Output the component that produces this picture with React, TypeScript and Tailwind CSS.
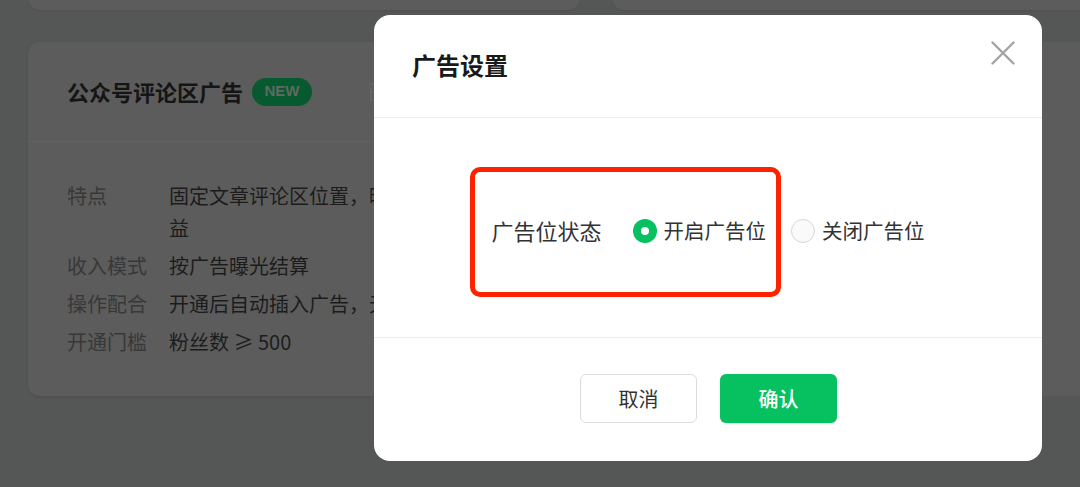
const cn = '"PingFang SC", "Noto Sans CJK SC", "Noto Sans", sans-serif';

const rows = [
    { label: "特点", value: "固定文章评论区位置，曝光稳定，提升流量主收益" },
    { label: "收入模式", value: "按广告曝光结算" },
    { label: "操作配合", value: "开通后自动插入广告，无需额外操作" },
    { label: "开通门槛", value: "粉丝数 ≥ 500" },
];

const Radio = ({ checked, label }: { checked: boolean; label: string }) => (
    <label className="flex items-center gap-[7px]">
        {checked ? (
            <span className="w-6 h-6 rounded-full bg-[#07c160] flex items-center justify-center">
                <span className="w-2 h-2 rounded-full bg-white" />
            </span>
        ) : (
            <span className="w-6 h-6 rounded-full bg-[#fafafa] border border-[#d6d6d6]" />
        )}
        <span className="text-[20.5px] text-[#333]">{label}</span>
    </label>
);

const App = () => {
    return (
        <div
            className="relative w-[1080px] h-[487px] overflow-hidden bg-[#555756]"
            style={{ fontFamily: cn }}
        >
            {/* page behind the mask */}
            <div className="grid grid-cols-[552px_552px] gap-8 pl-7">
                <div className="h-10 -mt-[30px] rounded-b-xl bg-[#5c5c5c] shadow-[0_1px_2px_rgba(0,0,0,0.08)]" />
                <div className="h-10 -mt-[30px] rounded-b-xl bg-[#5c5c5c] shadow-[0_1px_2px_rgba(0,0,0,0.08)]" />
                <div className="h-[354px] rounded-xl bg-[#5c5c5c] shadow-[0_1px_3px_rgba(0,0,0,0.1)]">
                    <div className="h-[100px] flex items-center pl-[39px] pr-10 border-b border-[#616161]">
                        <span className="text-[22px] font-bold text-[#151515]">公众号评论区广告</span>
                        <span className="ml-[9px] w-[60px] h-7 rounded-full bg-[#075a2f] flex items-center justify-center text-[15px] font-bold text-[#5d6b62]" style={{ fontFamily: '"Liberation Sans", sans-serif' }}>
                            NEW
                        </span>
                        <span className="ml-[55px] text-[20px] text-[#666]">已开通</span>
                    </div>
                    <div className="pt-[38px] pl-[39px] flex flex-col gap-[6px]">
                        {rows.map((row, index) => (
                            <div key={index} className="flex text-[20px] leading-[32px]">
                                <span className="w-[102px] shrink-0 text-[#383838]">{row.label}</span>
                                <span className="w-[420px] shrink-0 text-[#1c1c1c]">{row.value}</span>
                            </div>
                        ))}
                    </div>
                </div>
                <div className="h-[354px] rounded-xl bg-[#5c5c5c]" />
            </div>

            {/* dialog */}
            <div className="absolute left-[374px] top-[15px] w-[668px] h-[446px] bg-white rounded-2xl flex flex-col">
                <div className="h-[103px] shrink-0 flex items-center pl-[38px] border-b border-[#ececec]">
                    <span className="text-[24px] font-bold text-[#1a1a1a] -mt-[2px]">广告设置</span>
                </div>
                <button className="absolute right-[27px] top-[26px] w-6 h-6">
                    <svg width="24" height="24" viewBox="0 0 24 24" fill="none" stroke="#a3a3a3" strokeWidth="2.4" strokeLinecap="round">
                        <path d="M1.5 1.5 22.5 22.5M22.5 1.5 1.5 22.5" />
                    </svg>
                </button>
                <div className="h-[220px] shrink-0 flex items-center justify-center border-b border-[#ececec]">
                    <div className="relative flex items-center mt-[6px]">
                        <span className="text-[22px] text-[#333] mr-[31px]">广告位状态</span>
                        <Radio checked label="开启广告位" />
                        <span className="w-[25px]" />
                        <Radio checked={false} label="关闭广告位" />
                        <div className="absolute left-[-21px] top-[-47px] w-[311px] h-[130px] border-[5px] border-[#ff2200] rounded-[10px]" />
                    </div>
                </div>
                <div className="flex-1 flex items-start justify-center gap-[23px] pt-[36px] pl-[1px]">
                    <button className="w-[117px] h-[49px] rounded-md border border-[#dcdcdc] bg-white text-[20px] text-[#333]">
                        取消
                    </button>
                    <button className="w-[117px] h-[49px] rounded-md bg-[#07c160] text-[20px] font-medium text-white shadow-[0_1px_2px_rgba(0,0,0,0.1)]">
                        确认
                    </button>
                </div>
            </div>
        </div>
    );
};

export default App;
